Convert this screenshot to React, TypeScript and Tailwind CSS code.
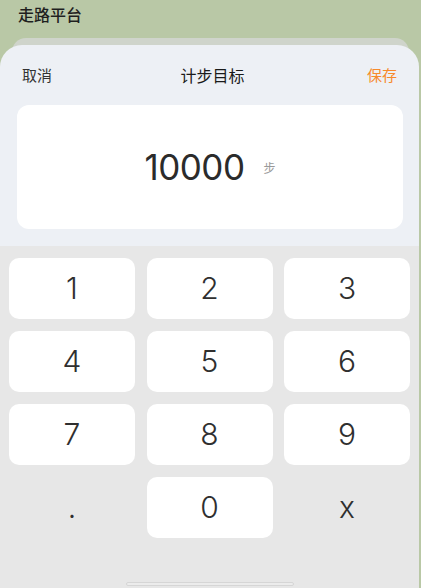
import { FunctionComponent } from "react";

const keys = ["1", "2", "3", "4", "5", "6", "7", "8", "9", ".", "0", "x"];

const App: FunctionComponent = () => {
  return (
    <div className="w-[421px] h-[588px] relative overflow-hidden flex flex-col bg-[#b9c8a6] font-['Noto_Sans','Noto_Sans_CJK_SC',sans-serif]">
      <div className="h-[38px] px-[18px] pt-[4px] text-[16px] leading-[22px] font-medium text-[#1f1f1f]">
        走路平台
      </div>
      <div className="mx-[12px] h-[14px] rounded-t-[18px] bg-[#cfd4cb]" />
      <div className="-mt-[7px] w-[419px] flex-1 flex flex-col rounded-t-[22px] overflow-hidden bg-[#edf0f5]">
        <div className="h-[60px] shrink-0 flex flex-row items-center justify-between px-[22px] pt-[1px]">
          <span className="text-[15px] text-[#333]">取消</span>
          <span className="text-[16px] text-[#1a1a1a] pl-[6px]">计步目标</span>
          <span className="text-[15px] text-[#f78a2c]">保存</span>
        </div>
        <div className="ml-[17px] mr-[16px] h-[124px] shrink-0 rounded-[12px] bg-white flex flex-row items-center justify-center">
          <span className="font-['Inter',sans-serif] text-[35px] font-normal text-[#2b2b2b] tracking-[-0.5px] pr-[2px]">10000</span>
          <span className="text-[12px] text-[#999] ml-[17px] mt-[4px]">步</span>
        </div>
        <div className="mt-[17px] flex-1 relative bg-[#e7e7e7] pt-[12px] px-[9px]">
          <div className="grid grid-cols-3 gap-x-[11.5px] gap-y-[12px]">
            {keys.map((k) => (
              <div
                key={k}
                className={`h-[61px] rounded-[10px] flex items-center justify-center font-['Inter',sans-serif] text-[30px] font-light text-[#2f2f2f] ${
                  k === "." || k === "x" ? "" : "bg-white"
                }`}
              >
                {k}
              </div>
            ))}
          </div>
          <div className="absolute left-[126px] bottom-[2px] w-[168px] h-[4px] rounded-full bg-[#ececec] border border-[#d6d6d6]" />
        </div>
      </div>
    </div>
  );
};

export default App;
